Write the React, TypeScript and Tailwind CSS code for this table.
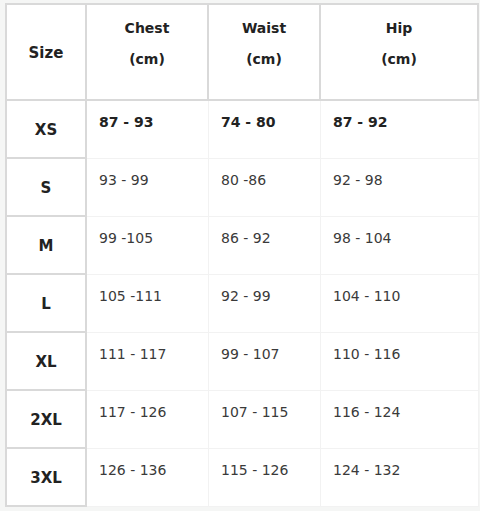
const rows = [
  { size: 'XS', chest: '87 - 93', waist: '74 - 80', hip: '87 - 92', bold: true },
  { size: 'S', chest: '93 - 99', waist: '80 -86', hip: '92 - 98' },
  { size: 'M', chest: '99 -105', waist: '86 - 92', hip: '98 - 104' },
  { size: 'L', chest: '105 -111', waist: '92 - 99', hip: '104 - 110' },
  { size: 'XL', chest: '111 - 117', waist: '99 - 107', hip: '110 - 116' },
  { size: '2XL', chest: '117 - 126', waist: '107 - 115', hip: '116 - 124' },
  { size: '3XL', chest: '126 - 136', waist: '115 - 126', hip: '124 - 132' },
];

const grid = 'grid grid-cols-[80px_122px_112px_158px]';

function HeadCell({ title }: { title: string }) {
  return (
    <div className="flex flex-col items-center pt-2 leading-[31px] border-r-2 border-[#d9d9d9]">
      <span>{title}</span>
      <span>(cm)</span>
    </div>
  );
}

export default function App() {
  return (
    <div
      className="h-[511px] bg-[#f5f6f5] pt-[3px] pl-[5px] overflow-hidden"
      style={{ fontFamily: '"DejaVu Sans", sans-serif' }}
    >
      <div className="w-[474px] bg-white border-t-2 border-l-2 border-[#d9d9d9]">
        <div className={`${grid} h-[96px] border-b-2 border-[#d9d9d9] text-[14px] font-bold text-[#222]`}>
          <div className="flex items-center justify-center pt-[3px] border-r-2 border-[#d9d9d9] text-[15px]">Size</div>
          <HeadCell title="Chest" />
          <HeadCell title="Waist" />
          <HeadCell title="Hip" />
        </div>

        {rows.map((r) => (
          <div key={r.size} className={`${grid} h-[58px] text-[14px]`}>
            <div className="flex items-center justify-center pt-[3px] border-r-2 border-b-2 border-[#d9d9d9] text-[15px] font-bold text-[#222]">
              {r.size}
            </div>
            {[r.chest, r.waist, r.hip].map((v, i) => (
              <div
                key={i}
                className={`pl-3 pt-[11px] leading-5 border-b border-r border-[#f2f2f2] ${
                  r.bold ? 'font-bold text-[#222]' : 'text-[#3a3a3a]'
                }`}
              >
                {v}
              </div>
            ))}
          </div>
        ))}
      </div>
    </div>
  );
}
